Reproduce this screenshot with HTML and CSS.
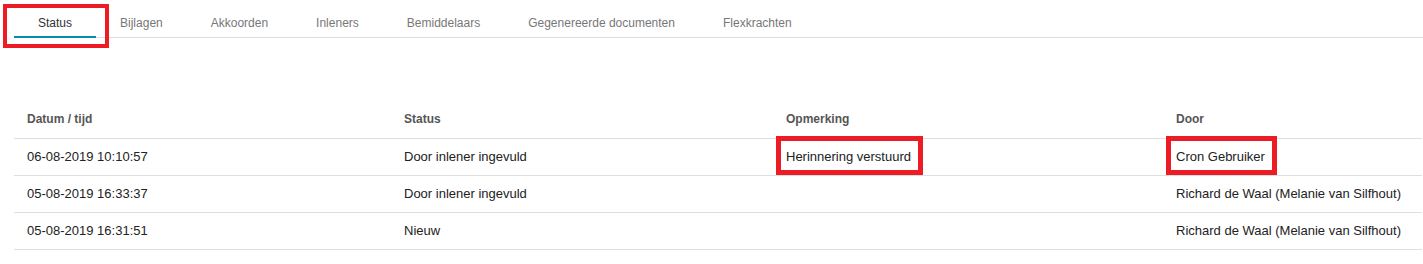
FILE: index.html
```html
<!DOCTYPE html>
<html lang="nl">
<head>
<meta charset="utf-8">
<title>Status</title>
<link rel="stylesheet" href="styles.css">
</head>
<body>
<div class="page">
  <nav class="tabs">
    <div class="tab active marked">Status</div>
    <div class="tab">Bijlagen</div>
    <div class="tab">Akkoorden</div>
    <div class="tab">Inleners</div>
    <div class="tab">Bemiddelaars</div>
    <div class="tab">Gegenereerde documenten</div>
    <div class="tab">Flexkrachten</div>
  </nav>
  <table class="log">
    <colgroup>
      <col class="c-date">
      <col class="c-status">
      <col class="c-note">
      <col class="c-by">
    </colgroup>
    <thead>
      <tr><th>Datum / tijd</th><th>Status</th><th>Opmerking</th><th>Door</th></tr>
    </thead>
    <tbody>
      <tr>
        <td>06-08-2019 10:10:57</td>
        <td>Door inlener ingevuld</td>
        <td><span class="hl">Herinnering verstuurd</span></td>
        <td><span class="hl">Cron Gebruiker</span></td>
      </tr>
      <tr>
        <td>05-08-2019 16:33:37</td>
        <td>Door inlener ingevuld</td>
        <td></td>
        <td>Richard de Waal (Melanie van Silfhout)</td>
      </tr>
      <tr>
        <td>05-08-2019 16:31:51</td>
        <td>Nieuw</td>
        <td></td>
        <td>Richard de Waal (Melanie van Silfhout)</td>
      </tr>
    </tbody>
  </table>
</div>
</body>
</html>
```
FILE: styles.css
```css
* { box-sizing: border-box; }
html, body { margin: 0; padding: 0; background: #fff; }
body {
  font-family: "Liberation Sans", Arial, sans-serif;
  color: #222;
}
.page {
  padding-left: 14px;
}
.tabs {
  display: flex;
  border-bottom: 1px solid #dedede;
}
.tab {
  height: 38px;
  margin-bottom: -1px;
  padding: 16px 24px 0;
  font-size: 12px;
  line-height: 14px;
  color: #777;
  border-bottom: 2px solid transparent;
  white-space: nowrap;
}
.tab.active {
  color: #333;
  border-bottom-color: #0b8aa6;
}
.marked { position: relative; }
.marked::after {
  content: "";
  position: absolute;
  left: -11px;
  right: -13px;
  top: 4px;
  bottom: -12px;
  border: 4px solid #ed1c24;
  pointer-events: none;
}
.log {
  margin-top: 63px;
  width: 1408px;
  border-collapse: collapse;
  table-layout: fixed;
}
.c-date { width: 377px; }
.c-status { width: 382px; }
.c-note { width: 390px; }
.c-by { width: 259px; }
.log th, .log td {
  text-align: left;
  padding: 0 0 0 13px;
  height: 37px;
  border-bottom: 1px solid #dedede;
  white-space: nowrap;
  vertical-align: middle;
}
.log th {
  font-size: 12px;
  font-weight: bold;
  color: #555;
  line-height: 36px;
}
.log td {
  font-size: 13px;
  color: #222;
  line-height: 36px;
}
.hl {
  position: relative;
  display: inline-block;
  vertical-align: top;
  line-height: 36px;
}
.hl::after {
  content: "";
  position: absolute;
  left: -10px;
  right: -12px;
  top: -3px;
  bottom: 0;
  border: 5px solid #ed1c24;
  pointer-events: none;
}
```
